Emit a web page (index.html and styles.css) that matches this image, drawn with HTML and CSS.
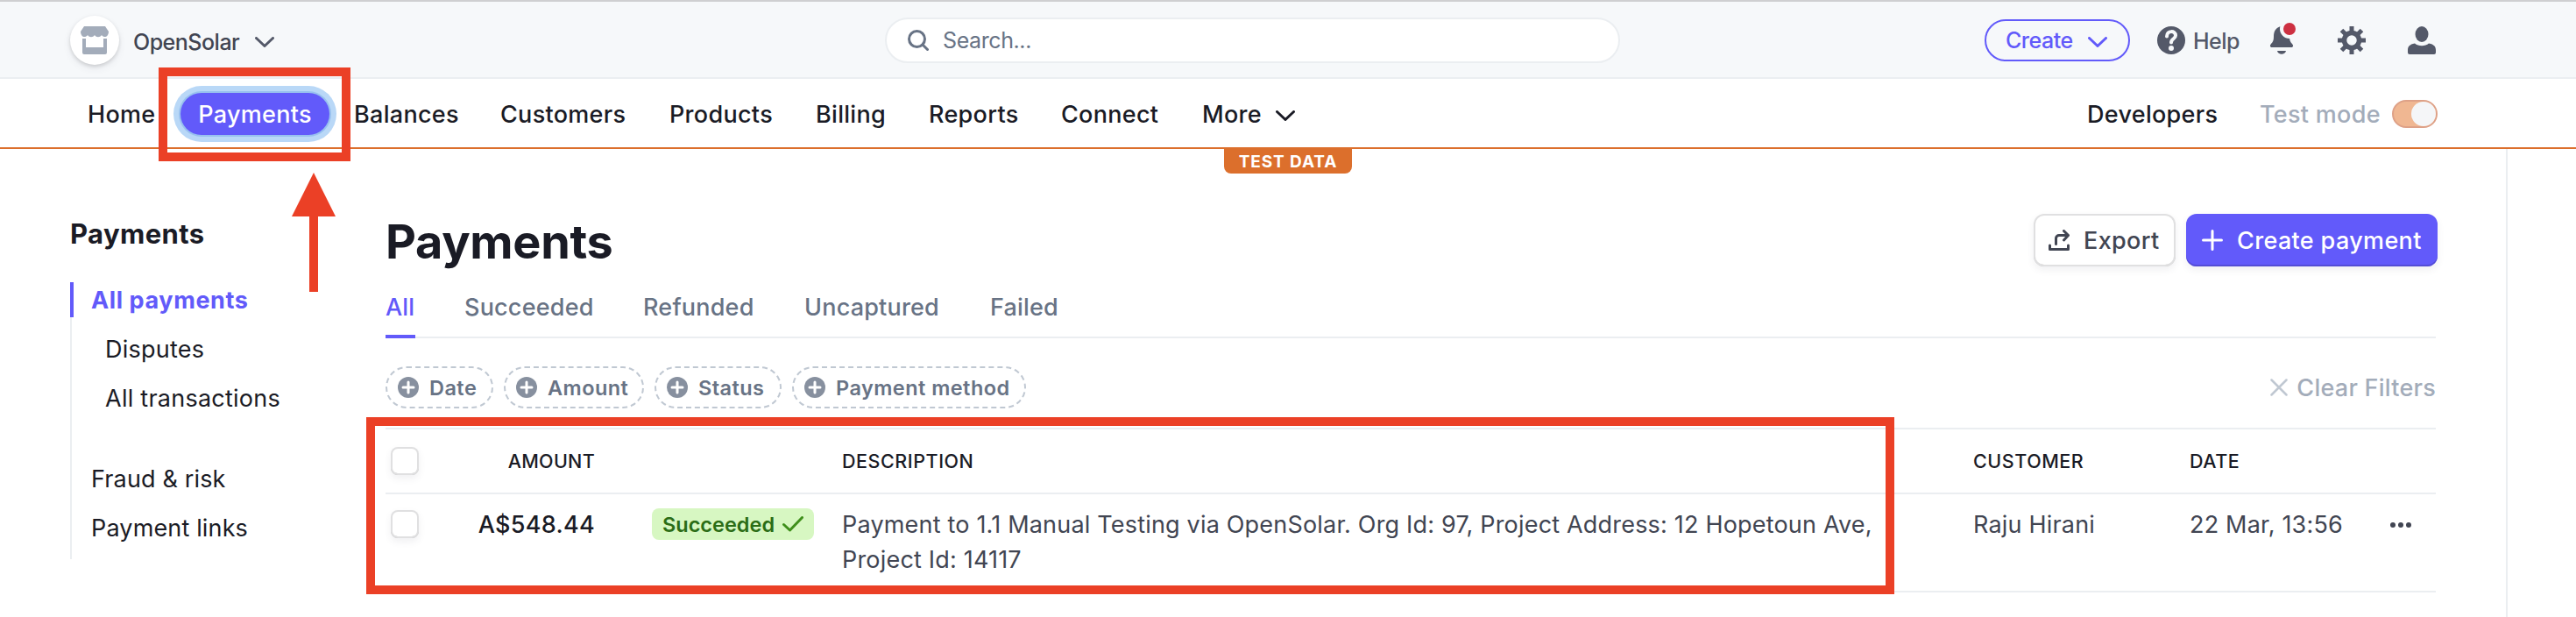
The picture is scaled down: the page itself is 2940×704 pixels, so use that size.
FILE: index.html
```html
<!DOCTYPE html>
<html lang="en">
<head>
    <meta charset="UTF-8">
    <title>Payments</title>
    <link rel="stylesheet" href="styles.css">
</head>
<body>
    <header class="topbar">
        <div class="account">
            <span class="avatar">
                <svg width="32" height="32" viewBox="0 0 32 32" fill="#a3acba">
                    <path d="M4 0h24l4 6c0 6-5 8-8 4-2 3-6 3-8 0-2 3-6 3-8 0-3 4-8 2-8-4z"/>
                    <path d="M2 14h4v10h20V14h4v16a2 2 0 0 1-2 2H4a2 2 0 0 1-2-2z"/>
                </svg>
            </span>
            <span class="account-name">OpenSolar</span>
            <svg class="chevron" width="22" height="12" viewBox="0 0 22 12"><path d="M1.500 1.500 11 10.500 20.500 1.500"/></svg>
        </div>
        <div class="search">
            <svg width="24" height="24" viewBox="0 0 24 24" fill="none" stroke="#687385" stroke-width="3" stroke-linecap="round"><circle cx="10.500" cy="10.500" r="9"/><path d="M17 17l5.500 5.500"/></svg>
            <span class="search-text">Search...</span>
        </div>
        <div class="actions">
            <div class="create">
                <span class="create-text">Create</span>
                <svg class="chevron" width="22" height="12" viewBox="0 0 22 12"><path d="M1.500 1.500 11 10.500 20.500 1.500"/></svg>
            </div>
            <svg class="help-icon" width="32" height="32" viewBox="0 0 32 32"><circle cx="16" cy="16" r="16" fill="#545969"/><path d="M11 11.500c0-7 10-7 10-1 0 4-5 3.500-5 8" fill="none" stroke="#f6f8fa" stroke-width="4" stroke-linecap="round"/><circle cx="16" cy="25" r="3" fill="#f6f8fa"/></svg>
            <span class="help">Help</span>
            <svg class="bell" width="32" height="40" viewBox="0 0 32 40"><path d="M15 8C8 9 6 14 6 20c0 4-1 6-3 8-2 2-1 4 1 4h22c2 0 3-2 1-4-2-2-3-4-3-8zM10 36h10c-1 5-9 5-10 0z" fill="#545969"/><circle cx="24" cy="11" r="11" fill="#f6f8fa"/><circle cx="24" cy="11" r="7" fill="#cd3041"/></svg>
            <svg class="gear" width="32" height="32" viewBox="-16 -16 32 32"><g fill="none" stroke="#545969"><circle r="8.500" stroke-width="5.500"/><path d="M0-10V-16M0 10V16M-10 0H-16M10 0H16M-7-7-11.500-11.500M7 7 11.500 11.500M7-7 11.500-11.500M-7 7-11.500 11.500" stroke-width="5"/></g></svg>
            <svg class="person" width="32" height="32" viewBox="0 0 32 32" fill="#545969"><ellipse cx="16" cy="9" rx="7.500" ry="9"/><path d="M8 19.500c4 3.500 12 3.500 16 0 6 1 8 4 8 7.500v3a2 2 0 0 1-2 2H2a2 2 0 0 1-2-2v-3c0-3.500 2-6.500 8-7.500z"/></svg>
        </div>
    </header>

    <nav class="nav">
        <a class="n-home">Home</a>
        <a class="n-payments">Payments</a>
        <a class="n-balances">Balances</a>
        <a class="n-customers">Customers</a>
        <a class="n-products">Products</a>
        <a class="n-billing">Billing</a>
        <a class="n-reports">Reports</a>
        <a class="n-connect">Connect</a>
        <a class="n-more">More</a>
        <svg class="chevron more-chevron" width="22" height="12" viewBox="0 0 22 12"><path d="M1.500 1.500 11 10.500 20.500 1.500"/></svg>
        <a class="n-developers">Developers</a>
        <span class="n-test">Test mode</span>
        <span class="toggle"><span class="knob"></span></span>
        <span class="test-data">TEST DATA</span>
    </nav>

    <div class="page">
        <aside class="sidebar">
            <h2>Payments</h2>
            <ul>
                <li class="active">All payments</li>
                <li class="sub">Disputes</li>
                <li class="sub">All transactions</li>
                <li class="split">Fraud &amp; risk</li>
                <li>Payment links</li>
            </ul>
        </aside>

        <main class="content">
            <div class="title-row">
                <h1>Payments</h1>
                <button class="btn export">
                    <svg width="24" height="24" viewBox="0 0 24 24" fill="none" stroke="#414552" stroke-width="3" stroke-linecap="round" stroke-linejoin="round"><path d="M1.500 18v4.500h21V18M8.500 16.500V10a3.500 3.500 0 0 1 3.500-3.500H22M17.500 1.500 22.500 6.500 17.500 12"/></svg>
                    <span>Export</span>
                </button>
                <button class="btn primary">
                    <svg width="24" height="24" viewBox="0 0 24 24" stroke="#fff" stroke-width="3" stroke-linecap="round"><path d="M12 1.500v21M1.500 12h21"/></svg>
                    <span>Create payment</span>
                </button>
            </div>

            <div class="tabs">
                <a class="tab t-all selected">All</a>
                <a class="tab t-succeeded">Succeeded</a>
                <a class="tab t-refunded">Refunded</a>
                <a class="tab t-uncaptured">Uncaptured</a>
                <a class="tab t-failed">Failed</a>
            </div>

            <div class="filters">
                <div class="filter f-date"><svg class="plus" viewBox="0 0 24 24"><circle cx="12" cy="12" r="12"/><path d="M12 6v12M6 12h12"/></svg><span>Date</span></div>
                <div class="filter f-amount"><svg class="plus" viewBox="0 0 24 24"><circle cx="12" cy="12" r="12"/><path d="M12 6v12M6 12h12"/></svg><span>Amount</span></div>
                <div class="filter f-status"><svg class="plus" viewBox="0 0 24 24"><circle cx="12" cy="12" r="12"/><path d="M12 6v12M6 12h12"/></svg><span>Status</span></div>
                <div class="filter f-method"><svg class="plus" viewBox="0 0 24 24"><circle cx="12" cy="12" r="12"/><path d="M12 6v12M6 12h12"/></svg><span>Payment method</span></div>
                <div class="clear">
                    <svg width="20" height="20" viewBox="0 0 20 20" stroke="#c0c8d2" stroke-width="2.500" stroke-linecap="round"><path d="M1.500 1.500l17 17M18.500 1.500l-17 17"/></svg>
                    <span>Clear Filters</span>
                </div>
            </div>

            <div class="table">
                <div class="row head">
                    <span class="checkbox"></span>
                    <span class="amount">AMOUNT</span>
                    <span></span>
                    <span>DESCRIPTION</span>
                    <span>CUSTOMER</span>
                    <span>DATE</span>
                </div>
                <div class="row">
                    <span class="checkbox"></span>
                    <span class="amount price">A$548.44</span>
                    <span class="status"><span class="status-text">Succeeded</span><svg width="24" height="18" viewBox="0 0 24 18" fill="none" stroke="#3f8f1b" stroke-width="3" stroke-linecap="round" stroke-linejoin="round"><path d="M1.500 9.500 8.500 16 22.500 1.500"/></svg></span>
                    <span>Payment to 1.1 Manual Testing via OpenSolar. Org Id: 97, Project Address: 12 Hopetoun Ave,<br>Project Id: 14117</span>
                    <span>Raju Hirani</span>
                    <span>22 Mar, 13:56</span>
                    <svg class="dots" width="24" height="6" viewBox="0 0 24 6" fill="#414552"><circle cx="3" cy="3" r="3"/><circle cx="12" cy="3" r="3"/><circle cx="21" cy="3" r="3"/></svg>
                </div>
            </div>
        </main>
    </div>

    <!-- annotations over the page -->
    <div class="mark mark-nav"></div>
    <div class="mark mark-row"></div>
    <svg class="arrow" width="50" height="136" viewBox="0 0 50 136" fill="#eb4026"><path d="M25 0 50 50H30V136H20V50H0z"/></svg>
</body>
</html>
```

FILE: styles.css
```css
* {
    box-sizing: border-box;
}

body {
    margin: 0;
    width: 2940px;
    height: 704px;
    overflow: hidden;
    position: relative;
    background: #fff;
    color: #1a1b25;
    font-family: Inter, "Liberation Sans", sans-serif;
    font-size: 27px;
    line-height: 40px;
    letter-spacing: 0.19px;
    white-space: nowrap;
}

svg {
    flex: none;
    display: block;
}

.chevron {
    fill: none;
    stroke: currentColor;
    stroke-width: 3;
    stroke-linecap: round;
    stroke-linejoin: round;
}

/* top bar */
.topbar {
    display: grid;
    grid-template-columns: 930px 839px 1fr;
    align-items: center;
    height: 90px;
    padding: 4px 160px 2px 80px;
    background: #f6f8fa;
    border-top: 2px solid #cfcfd1;
    border-bottom: 2px solid #ebeef1;
    font-size: 25px;
    font-weight: 500;
    letter-spacing: -0.5px;
    color: #545969;
}

.account {
    display: flex;
    align-items: center;
}

.avatar {
    display: flex;
    align-items: center;
    justify-content: center;
    width: 56px;
    height: 56px;
    border-radius: 50%;
    background: #fff;
    box-shadow: 0 2px 4px rgba(0, 0, 0, 0.14), 0 4px 10px rgba(60, 66, 87, 0.08);
}

.account-name {
    width: 121px;
    margin: 3px 18px 0 16px;
    color: #414552;
}

.account .chevron {
    margin-top: 3px;
}

.search {
    display: flex;
    align-items: center;
    height: 52px;
    padding-left: 24px;
    background: #fff;
    border: 2px solid #ebeef1;
    border-radius: 26px;
    font-weight: 400;
    letter-spacing: -0.4px;
    color: #687385;
}

.search-text {
    margin-left: 16px;
}

.actions {
    display: flex;
    align-items: center;
    justify-content: flex-end;
}

.create {
    display: flex;
    align-items: center;
    width: 166px;
    height: 48px;
    padding-left: 22px;
    border: 2px solid #625afa;
    border-radius: 24px;
    color: #625afa;
}

.create-text {
    width: 77px;
}

.create .chevron {
    margin: 4px 0 0 17px;
}

.help-icon {
    margin-left: 31px;
}

.help {
    width: 53px;
    margin: 1px 0 0 9px;
}

.bell {
    margin: -8px 0 0 33px;
}

.gear {
    margin-left: 47px;
}

.person {
    margin-left: 48px;
}

/* main navigation */
.nav {
    position: relative;
    display: flex;
    align-items: center;
    height: 80px;
    padding: 2px 158px 0 100px;
    border-bottom: 2px solid #dc6f2c;
    font-weight: 500;
    letter-spacing: 0.3px;
    line-height: 42px;
}

.nav > a,
.n-test {
    padding-top: 1px;
}

.n-home {
    width: 78px;
}

.n-payments {
    width: 170px;
    height: 48px;
    margin: 0 28px;
    border-radius: 24px;
    background: #625afa;
    color: #fff;
    line-height: 48px;
    text-align: center;
    box-shadow: 0 0 0 2px #98c1ef, 0 0 0 8px #b9d8f7;
}

.n-balances {
    width: 167px;
}

.n-customers {
    width: 193px;
}

.n-products {
    width: 167px;
}

.n-billing {
    width: 129px;
}

.n-reports {
    width: 151px;
}

.n-connect {
    width: 161px;
}

.n-more {
    width: 84px;
}

.more-chevron {
    margin-top: 3px;
}

.n-developers {
    margin-left: auto;
    width: 197px;
}

.n-test {
    width: 151px;
    color: #a3acba;
}

.toggle {
    display: flex;
    justify-content: flex-end;
    align-items: center;
    width: 52px;
    height: 32px;
    border: 2px solid #dea187;
    border-radius: 16px;
    background: #f0b792;
}

.knob {
    width: 28px;
    height: 28px;
    border-radius: 50%;
    background: #f5f6f8;
}

.test-data {
    position: absolute;
    left: 1397px;
    top: 78px;
    width: 146px;
    height: 30px;
    border-radius: 0 0 8px 8px;
    background: #dc6f2c;
    color: #fff;
    font-size: 19px;
    font-weight: 700;
    letter-spacing: 0.9px;
    line-height: 33px;
    text-align: center;
}

/* page body */
.page {
    display: grid;
    grid-template-columns: 360px 2340px;
    width: 2862px;
    height: 534px;
    padding-left: 80px;
    border-right: 2px solid #ebeef1;
}

.sidebar h2 {
    margin: 77px 0 35px;
    font-size: 31px;
    font-weight: 700;
    letter-spacing: 0.4px;
    line-height: 40px;
}

.sidebar ul {
    margin: 0;
    padding: 0;
    list-style: none;
    width: 280px;
    height: 316px;
    box-shadow: inset 2px 0 #ebeef1;
}

.sidebar li {
    height: 40px;
    margin-bottom: 16px;
    padding-left: 24px;
    line-height: 42px;
    letter-spacing: 0.15px;
}

.sidebar .active {
    border-left: 4px solid #625afa;
    padding-left: 20px;
    color: #625afa;
    font-weight: 700;
    letter-spacing: 0.6px;
}

.sidebar .sub {
    padding-left: 40px;
    letter-spacing: 0.25px;
}

.sidebar .split {
    margin-top: 52px;
}

.title-row {
    display: flex;
    align-items: center;
    width: 2342px;
    margin-top: 74px;
    height: 60px;
}

h1 {
    margin: 0 auto 0 0;
    padding-top: 3px;
    font-size: 54px;
    font-weight: 700;
    letter-spacing: -0.3px;
    line-height: 60px;
}

.btn {
    display: flex;
    align-items: center;
    height: 60px;
    border: 0;
    padding: 0 0 0 18px;
    border-radius: 12px;
    font: inherit;
    font-weight: 500;
    letter-spacing: 0.35px;
}

.export {
    width: 162px;
    margin-right: 12px;
    padding-left: 17px;
    background: #fff;
    color: #414552;
    box-shadow: inset 0 0 0 2px #e0e0e1, inset 0 -2px 0 #bdbdbe, 0 4px 8px rgba(60, 66, 87, 0.08);
}

.primary {
    width: 287px;
    background: #625afa;
    color: #fff;
    box-shadow: inset 0 -2px 0 #544dd6, 0 4px 8px rgba(60, 66, 87, 0.08);
}

.btn span {
    margin: 1px 0 0 16px;
}

.tabs {
    display: flex;
    height: 60px;
    margin-top: 22px;
    gap: 56px;
    border-bottom: 2px solid #ebeef1;
    color: #687385;
    font-weight: 500;
    letter-spacing: 0.2px;
    line-height: 50px;
}

.tab {
    height: 60px;
}

.t-all {
    width: 34px;
}

.t-succeeded {
    width: 148px;
}

.t-refunded {
    width: 128px;
}

.t-uncaptured {
    width: 156px;
}

.selected {
    border-bottom: 4px solid #625afa;
    color: #625afa;
}

.filters {
    display: flex;
    gap: 12px;
    margin-top: 32px;
    height: 48px;
}

.filter {
    display: flex;
    align-items: center;
    gap: 12px;
    height: 48px;
    padding-left: 12px;
    border: 2px dashed #c0c8d2;
    border-radius: 24px;
    color: #687385;
    font-size: 23.5px;
    font-weight: 600;
    letter-spacing: 0.45px;
}

.filters span {
    padding-top: 1px;
}

.f-date {
    width: 123px;
}

.f-amount {
    width: 160px;
}

.f-status {
    width: 145px;
}

.f-method {
    width: 267px;
}

.plus {
    width: 24px;
    height: 24px;
    fill: #87909f;
    stroke: #fff;
    stroke-width: 3;
    stroke-linecap: round;
}

.plus circle {
    stroke: none;
}

.clear {
    display: flex;
    align-items: center;
    gap: 10px;
    margin-left: auto;
    color: #a3acba;
    font-weight: 500;
    letter-spacing: 0.25px;
}

.table {
    margin-top: 22px;
    border-top: 2px solid #ebeef1;
}

.row {
    display: grid;
    grid-template-columns: 32px 201px 282px 1291px 247px 229px 52px;
    height: 112px;
    padding: 15px 0 0 6px;
    border-bottom: 2px solid #ebeef1;
    color: #414552;
}

.row.head {
    height: 74px;
    padding-top: 16px;
    color: #1a1b25;
    font-size: 21.5px;
    font-weight: 500;
    letter-spacing: 0.55px;
}

.checkbox {
    width: 32px;
    height: 32px;
    margin-top: 3px;
    border-radius: 8px;
    background: #fff;
    box-shadow: inset 0 0 0 2px #e0e0e1, inset 0 -2px 0 #bdbdbe, 0 4px 8px rgba(60, 66, 87, 0.08);
}

.head .checkbox {
    margin-top: 4px;
}

.amount {
    text-align: right;
    color: #1a1b25;
}

.head .amount {
    letter-spacing: 0.3px;
}

.price {
    font-weight: 500;
    letter-spacing: 0.3px;
}

.status {
    display: flex;
    align-items: center;
    width: 185px;
    height: 36px;
    margin: 1px 0 0 65px;
    padding-left: 12px;
    border-radius: 8px;
    background: #d7f7c2;
    color: #2b6d16;
    font-size: 23.5px;
    font-weight: 600;
}

.status-text {
    width: 137px;
    padding-top: 1px;
    letter-spacing: 0;
}

.dots {
    margin-top: 17px;
}

/* annotations */
.mark {
    position: absolute;
    border: 10px solid #eb4026;
}

.mark-nav {
    left: 181px;
    top: 77px;
    width: 219px;
    height: 107px;
}

.mark-row {
    left: 418px;
    top: 476px;
    width: 1744px;
    height: 202px;
}

.arrow {
    position: absolute;
    left: 333px;
    top: 197px;
}
```
